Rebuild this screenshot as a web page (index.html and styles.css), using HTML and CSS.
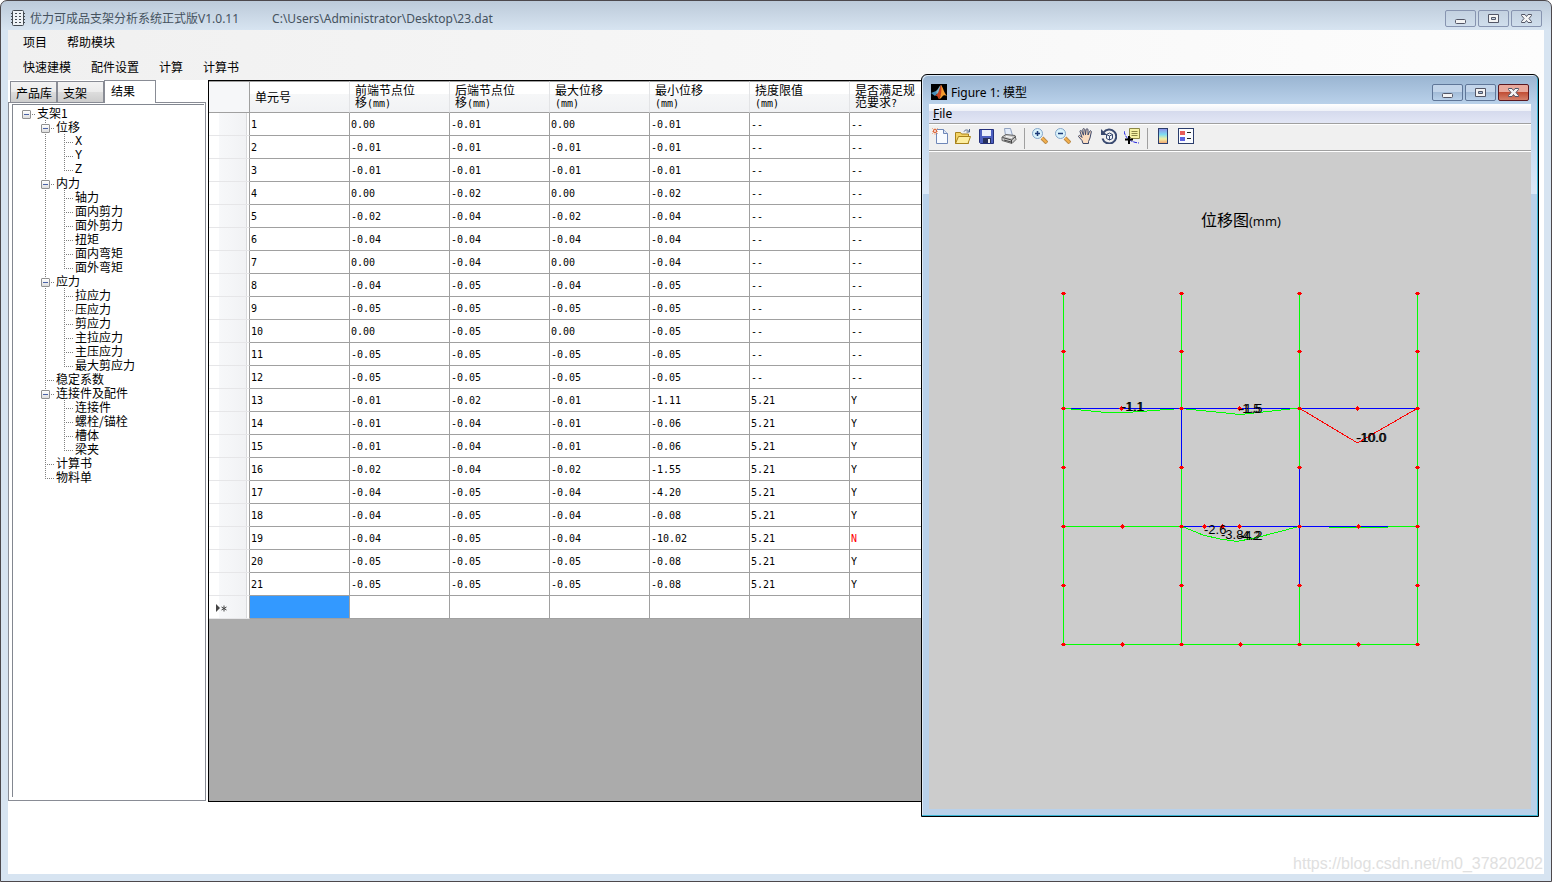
FILE: index.html
```html
<!DOCTYPE html>
<html lang="zh-CN">

  <head>
    <meta charset="utf-8"/>
    <title>优力可成品支架分析系统</title>
    <link rel="stylesheet" href="styles.css">
  </head>

  <body>

    <div id="main-window">

      <div class="titlebar">
        <svg class="app-icon" width="14" height="16" viewBox="0 0 14 16" fill="none" stroke="#444b52">
          <rect x="1.500" y="0.500" width="11" height="15" rx="1" fill="#eef2f6"/>
          <path d="M4 3.500h2M8 3.500h2M4 6.500h2M8 6.500h2M4 9.500h2M8 9.500h2M4 12.500h2M8 12.500h2M0 3.500h2M0 6.500h2M0 9.500h2M0 12.500h2M12 3.500h2M12 6.500h2M12 9.500h2M12 12.500h2"/>
        </svg>
        <span class="title">优力可成品支架分析系统正式版V1.0.11</span>
        <span class="path">C:\Users\Administrator\Desktop\23.dat</span>
        <div class="controls">
          <button aria-label="最小化"><svg width="12" height="12"><rect x="0.500" y="6.500" width="10" height="4" rx="1"/></svg></button>
          <button aria-label="最大化"><svg width="12" height="12"><path fill-rule="evenodd" d="M.5 1.500h10v8h-10zM3.500 4.500h4v2h-4z"/></svg></button>
          <button aria-label="关闭"><svg width="12" height="12"><path d="M.5 1.500h3.500l1.500 2 1.500-2h3.500v1l-2.500 3 2.500 3v1h-3.500l-1.500-2-1.500 2h-3.500v-1l2.500-3-2.500-3z"/></svg></button>
        </div>
      </div>

      <div class="menus">
        <div class="menubar">
          <button>项目</button>
          <button>帮助模块</button>
        </div>
        <div class="menubar">
          <button>快速建模</button>
          <button>配件设置</button>
          <button>计算</button>
          <button>计算书</button>
        </div>
      </div>

      <div class="client">

        <div class="side">
          <div class="tabs" role="tablist">
            <button role="tab">产品库</button>
            <button role="tab">支架</button>
            <button role="tab" class="selected" aria-selected="true">结果</button>
          </div>
          <div class="tab-page">
            <div class="tree-box">
              <ul class="tree">
                <li><button class="expander" aria-label="折叠"></button>支架1
                  <ul>
                    <li><button class="expander" aria-label="折叠"></button>位移
                      <ul>
                        <li class="axis">X</li>
                        <li class="axis">Y</li>
                        <li class="axis">Z</li>
                      </ul>
                    </li>
                    <li><button class="expander" aria-label="折叠"></button>内力
                      <ul>
                        <li>轴力</li>
                        <li>面内剪力</li>
                        <li>面外剪力</li>
                        <li>扭矩</li>
                        <li>面内弯矩</li>
                        <li>面外弯矩</li>
                      </ul>
                    </li>
                    <li><button class="expander" aria-label="折叠"></button>应力
                      <ul>
                        <li>拉应力</li>
                        <li>压应力</li>
                        <li>剪应力</li>
                        <li>主拉应力</li>
                        <li>主压应力</li>
                        <li>最大剪应力</li>
                      </ul>
                    </li>
                    <li>稳定系数</li>
                    <li><button class="expander" aria-label="折叠"></button>连接件及配件
                      <ul>
                        <li>连接件</li>
                        <li>螺栓/锚栓</li>
                        <li>槽体</li>
                        <li>梁夹</li>
                      </ul>
                    </li>
                    <li>计算书</li>
                    <li>物料单</li>
                  </ul>
                </li>
              </ul>
            </div>
          </div>
        </div>

        <div class="grid">
          <table>
            <colgroup><col class="row-head"><col><col><col><col><col><col><col></colgroup>
            <thead>
              <tr>
                <th></th>
                <th>单元号</th>
                <th>前端节点位<br>移<span class="unit">(mm)</span></th>
                <th>后端节点位<br>移<span class="unit">(mm)</span></th>
                <th>最大位移<br><span class="unit">(mm)</span></th>
                <th>最小位移<br><span class="unit">(mm)</span></th>
                <th>挠度限值<br><span class="unit">(mm)</span></th>
                <th>是否满足规<br>范要求<span class="unit">?</span></th>
              </tr>
            </thead>
            <tbody>
              <tr><th></th><td>1</td><td>0.00</td><td>-0.01</td><td>0.00</td><td>-0.01</td><td>--</td><td>--</td></tr>
              <tr><th></th><td>2</td><td>-0.01</td><td>-0.01</td><td>-0.01</td><td>-0.01</td><td>--</td><td>--</td></tr>
              <tr><th></th><td>3</td><td>-0.01</td><td>-0.01</td><td>-0.01</td><td>-0.01</td><td>--</td><td>--</td></tr>
              <tr><th></th><td>4</td><td>0.00</td><td>-0.02</td><td>0.00</td><td>-0.02</td><td>--</td><td>--</td></tr>
              <tr><th></th><td>5</td><td>-0.02</td><td>-0.04</td><td>-0.02</td><td>-0.04</td><td>--</td><td>--</td></tr>
              <tr><th></th><td>6</td><td>-0.04</td><td>-0.04</td><td>-0.04</td><td>-0.04</td><td>--</td><td>--</td></tr>
              <tr><th></th><td>7</td><td>0.00</td><td>-0.04</td><td>0.00</td><td>-0.04</td><td>--</td><td>--</td></tr>
              <tr><th></th><td>8</td><td>-0.04</td><td>-0.05</td><td>-0.04</td><td>-0.05</td><td>--</td><td>--</td></tr>
              <tr><th></th><td>9</td><td>-0.05</td><td>-0.05</td><td>-0.05</td><td>-0.05</td><td>--</td><td>--</td></tr>
              <tr><th></th><td>10</td><td>0.00</td><td>-0.05</td><td>0.00</td><td>-0.05</td><td>--</td><td>--</td></tr>
              <tr><th></th><td>11</td><td>-0.05</td><td>-0.05</td><td>-0.05</td><td>-0.05</td><td>--</td><td>--</td></tr>
              <tr><th></th><td>12</td><td>-0.05</td><td>-0.05</td><td>-0.05</td><td>-0.05</td><td>--</td><td>--</td></tr>
              <tr><th></th><td>13</td><td>-0.01</td><td>-0.02</td><td>-0.01</td><td>-1.11</td><td>5.21</td><td>Y</td></tr>
              <tr><th></th><td>14</td><td>-0.01</td><td>-0.04</td><td>-0.01</td><td>-0.06</td><td>5.21</td><td>Y</td></tr>
              <tr><th></th><td>15</td><td>-0.01</td><td>-0.04</td><td>-0.01</td><td>-0.06</td><td>5.21</td><td>Y</td></tr>
              <tr><th></th><td>16</td><td>-0.02</td><td>-0.04</td><td>-0.02</td><td>-1.55</td><td>5.21</td><td>Y</td></tr>
              <tr><th></th><td>17</td><td>-0.04</td><td>-0.05</td><td>-0.04</td><td>-4.20</td><td>5.21</td><td>Y</td></tr>
              <tr><th></th><td>18</td><td>-0.04</td><td>-0.05</td><td>-0.04</td><td>-0.08</td><td>5.21</td><td>Y</td></tr>
              <tr><th></th><td>19</td><td>-0.04</td><td>-0.05</td><td>-0.04</td><td>-10.02</td><td>5.21</td><td class="fail">N</td></tr>
              <tr><th></th><td>20</td><td>-0.05</td><td>-0.05</td><td>-0.05</td><td>-0.08</td><td>5.21</td><td>Y</td></tr>
              <tr><th></th><td>21</td><td>-0.05</td><td>-0.05</td><td>-0.05</td><td>-0.08</td><td>5.21</td><td>Y</td></tr>
              <tr>
                <th><svg width="11" height="9"><path d="M0 0v8l4-4z" fill="#444"/><path d="M8 1.500v6M5.500 3l5 3M10.500 3l-5 3" stroke="#444" fill="none"/></svg></th>
                <td class="current"></td><td></td><td></td><td></td><td></td><td></td><td></td>
              </tr>
            </tbody>
          </table>
        </div>

      </div>

      <div class="watermark">https://blog.csdn.net/m0_37820202</div>

    </div>

    <div id="figure-window">

      <div class="titlebar">
        <svg class="matlab-icon" width="16" height="16" viewBox="0 0 16 16">
          <rect width="16" height="16"/>
          <path d="M0 9l5-2 2 2-3 3z" fill="#4a90b8"/>
          <path d="M5 7c2-1 3-5 5-6l-2 8-2 1z" fill="#7fb6cc"/>
          <path d="M4 12l3-3c1-2 2-7 3-8 1 0 1 3 2 6l-3 6c-1 2-2 2-2 1s-1-3-3-2z" fill="#c8431c"/>
          <path d="M10 1c2 2 3 8 6 11-2-1-4-1-5 1-1 1-2 2-3 2 2-3 3-8 2-14z" fill="#f39b2d"/>
        </svg>
        <span class="title">Figure 1: 模型</span>
        <div class="controls">
          <button aria-label="Minimize"><svg width="12" height="12"><rect x="0.500" y="6.500" width="10" height="4" rx="1"/></svg></button>
          <button aria-label="Maximize"><svg width="12" height="12"><path fill-rule="evenodd" d="M.5 1.500h10v8h-10zM3.500 4.500h4v2h-4z"/></svg></button>
          <button class="close" aria-label="Close"><svg width="12" height="12"><path d="M.5 1.500h3.500l1.500 2 1.500-2h3.500v1l-2.500 3 2.500 3v1h-3.500l-1.500-2-1.500 2h-3.500v-1l2.500-3-2.500-3z"/></svg></button>
        </div>
      </div>

      <div class="figure-menu"><button><u>F</u>ile</button></div>

      <div class="toolbar">
        <button aria-label="New Figure"><svg width="16" height="16">
          <path d="M4.500 1.500h7l4 4v10h-11z" fill="#f8fbff" stroke="#6f87b8"/>
          <path d="M11.500 1.500v4h4" fill="#dbe6f6" stroke="#6f87b8"/>
          <path d="M3 0v7M0 3.500h6M0 0l6 6M6 0l-6 6" stroke="#f0b090"/>
          <circle cx="3" cy="3" r="1.500" fill="#fff" stroke="#d8562a"/>
        </svg></button>
        <button aria-label="Open File"><svg width="16" height="16">
          <path d="M.5 15.500v-11h5l1 1.500h7v9.500z" fill="#f3d366" stroke="#a8821a"/>
          <path d="M.5 15.500l3-7h12l-2.500 7z" fill="#fdeea0" stroke="#a8821a"/>
          <path d="M9 3.500c1-2 4-2 5 0M14.500 1v3h-3" fill="none" stroke="#4a6288"/>
        </svg></button>
        <button aria-label="Save Figure"><svg width="16" height="16">
          <path d="M1.500 1.500h14v14h-13l-1-1z" fill="#4c5fc0" stroke="#24307c"/>
          <path d="M4 2h9v6h-9z" fill="#e9eefb"/>
          <path d="M5 10h8v5h-8z" fill="#26305c"/>
          <path d="M10 11h2v4h-2z" fill="#eee"/>
        </svg></button>
        <button aria-label="Print Figure"><svg width="16" height="16">
          <path d="M4.500 7.500l-1-7h6l2 7" fill="#e3ecfa" stroke="#91a2c0"/>
          <path d="M1 9l4-2.500 9 1 1 4-4 4-10-3z" fill="#c9c9c9" stroke="#666"/>
          <path d="M1.500 9.500l9 2.500 4-3.500M10.500 12v3M3 12l7 2" fill="none" stroke="#444"/>
          <path d="M5 8.500l6 1" stroke="#fff"/>
        </svg></button>
        <span class="sep"></span>
        <button aria-label="Zoom In"><svg width="16" height="16">
          <path d="M10 10l5 5" stroke="#b98a48" stroke-width="4"/><path d="M10 10l4.500 4.500" stroke="#f5b04c" stroke-width="2"/>
          <circle cx="5.500" cy="5.500" r="5" fill="#d9f2fb" stroke="#83a5c8"/>
          <path d="M3 5.500h5M5.500 3v5" stroke="#1c3a78" stroke-width="1.500"/>
        </svg></button>
        <button aria-label="Zoom Out"><svg width="16" height="16">
          <path d="M10 10l5 5" stroke="#b98a48" stroke-width="4"/><path d="M10 10l4.500 4.500" stroke="#f5b04c" stroke-width="2"/>
          <circle cx="5.500" cy="5.500" r="5" fill="#d9f2fb" stroke="#83a5c8"/>
          <path d="M3 5.500h5" stroke="#1c3a78" stroke-width="1.500"/>
        </svg></button>
        <button aria-label="Pan"><svg width="16" height="16">
          <path d="M5 15.500l-1-3-3.500-4c0-1 1-1.500 2-.5l1.500 1.500-2-6c0-1.200 1.300-1.400 1.800-.3l1.700 4-.7-5.500c0-1.500 1.700-1.500 2 0l.7 5 .6-5c.2-1.500 1.900-1.300 1.900.2v5.100l1.500-3.500c.5-1.300 2-.8 1.800.5l-1.300 6-1.500 3.500v2z" fill="#fbdcc0" stroke="#3b4668"/>
        </svg></button>
        <button aria-label="Rotate 3D"><svg width="16" height="16">
          <path d="M2.500 4.500a7 7 0 1 1-1 6" fill="none" stroke="#3a4a70" stroke-width="2"/>
          <path d="M0 1v6h6z" fill="#3a4a70"/>
          <path d="M5.500 6.500l3-1.500 3 1.500v4l-3 1.500-3-1.500zM5.500 6.500l3 1.500 3-1.500M8.500 8v4" fill="#eef3fa" stroke="#3a4a70"/>
        </svg></button>
        <button aria-label="Data Cursor"><svg width="16" height="16">
          <path d="M0 3c1 6 5 11 15 12" fill="none" stroke="#2222e0" stroke-dasharray="4 1"/>
          <path d="M5.500.5h10v10h-8l-2-2z" fill="#f6f2a4" stroke="#8c8746"/>
          <path d="M7.500 3.500h6M7.500 5.500h6M7.500 7.500h6" stroke="#8c8746"/>
          <path d="M1 11.500h8M5 8v8" stroke="#000" stroke-width="2"/>
        </svg></button>
        <span class="sep"></span>
        <button aria-label="Insert Colorbar"><svg width="16" height="16">
          <defs><linearGradient id="cb" x2="0" y2="1"><stop offset="0" stop-color="#8d8be8"/><stop offset=".4" stop-color="#7fdcf0"/><stop offset=".7" stop-color="#f3efa0"/><stop offset="1" stop-color="#f0a070"/></linearGradient></defs>
          <rect x="3.500" y="0.500" width="9" height="15" fill="url(#cb)" stroke="#2b3d6c"/>
        </svg></button>
        <button aria-label="Insert Legend"><svg width="16" height="16">
          <rect x="0.500" y="0.500" width="15" height="15" fill="#fafcff" stroke="#2b3d6c"/>
          <path d="M2 3h5v4h-5z" fill="#e85c58"/><path d="M2 9h5v4h-5z" fill="#5c62e0"/>
          <path d="M9 4.500h4M9 10.500h4" stroke="#222"/>
        </svg></button>
      </div>

      <svg class="plot" viewBox="929 152 602 657">
        <defs>
          <path id="node" d="M-2 0h5v1h-5zM-1 -1h3v3h-3z"/>
          <path id="mid-node" d="M-2 0h5v1h-5zM-1 -1h3v3h-3zM0 -2h1v5h-1z"/>
        </defs>

        <text class="plot-title" x="1201" y="226">位移图<tspan class="plot-unit">(mm)</tspan></text>

        <g class="lines">
          <!-- columns -->
          <path class="green" d="M1063.500 293v352M1181.500 293v352M1299.500 293v352M1417.500 293v352"/>
          <path class="blue" d="M1181.500 409v58M1299.500 468v117"/>
          <!-- beams -->
          <path class="blue" d="M1063 408.500h355M1181 526.500h207"/>
          <path class="green" d="M1063 408.500h8M1063 526.500h118M1388 526.500h30M1329 527.500h59M1063 644.500h355"/>
          <!-- displacement curves -->
          <path class="green" d="M1071 409l30 3h32l41-3M1186 409l40 4 14 1.500 14-1.500 45-5"/>
          <path class="green" d="M1181 526l22 9 17 4 17 2.500 20-4 42-11"/>
          <path class="red" d="M1299 408l57 34h3l59-34"/>
        </g>

        <g class="nodes">
          <use href="#node" x="1063" y="293"/><use href="#node" x="1181" y="293"/><use href="#node" x="1299" y="293"/><use href="#node" x="1417" y="293"/>
          <use href="#node" x="1063" y="351"/><use href="#node" x="1181" y="351"/><use href="#node" x="1299" y="351"/><use href="#node" x="1417" y="351"/>
          <use href="#node" x="1063" y="408"/><use href="#mid-node" x="1121" y="408"/><use href="#node" x="1181" y="408"/><use href="#mid-node" x="1239" y="408"/>
          <use href="#node" x="1299" y="408"/><use href="#mid-node" x="1357" y="408"/><use href="#node" x="1417" y="408"/>
          <use href="#node" x="1063" y="467"/><use href="#node" x="1181" y="467"/><use href="#node" x="1299" y="467"/><use href="#node" x="1417" y="467"/>
          <use href="#node" x="1063" y="526"/><use href="#mid-node" x="1122" y="526"/><use href="#node" x="1181" y="526"/><use href="#mid-node" x="1204" y="526"/><use href="#mid-node" x="1222" y="526"/>
          <use href="#mid-node" x="1239" y="526"/><use href="#node" x="1299" y="526"/><use href="#mid-node" x="1358" y="526"/><use href="#node" x="1417" y="526"/>
          <use href="#node" x="1063" y="585"/><use href="#node" x="1181" y="585"/><use href="#node" x="1299" y="585"/><use href="#node" x="1417" y="585"/>
          <use href="#node" x="1063" y="644"/><use href="#mid-node" x="1122" y="644"/><use href="#node" x="1181" y="644"/><use href="#mid-node" x="1240" y="644"/>
          <use href="#node" x="1299" y="644"/><use href="#mid-node" x="1358" y="644"/><use href="#node" x="1417" y="644"/>
        </g>

        <g class="values">
          <text x="1121" y="411">-1.1</text><text x="1122" y="411">-1.1</text>
          <text x="1238" y="413">-1.5</text><text x="1240" y="413">-1.5</text>
          <text x="1356" y="442">-10.0</text><text x="1357" y="442">-10.0</text>
          <text x="1204" y="534">-2.6</text>
          <text x="1221" y="539">-3.8</text>
          <text x="1238" y="540">-4.2</text><text x="1240" y="540">-4.2</text>
        </g>
      </svg>

    </div>

  </body>

</html>
```

FILE: styles.css
```css
*
{
box-sizing: border-box;
}

body
{
margin: 0px;
background-color: white;
font-family: "Noto Sans","Noto Sans CJK SC",sans-serif;
font-size: 12px;
color: black;
}

button
{
margin: 0px;
padding: 0px;
border: none;
background: none;
font: inherit;
color: inherit;
}

svg
{
display: block;
}

/* main window */

#main-window
{
position: relative;
display: flex;
flex-direction: column;
min-height: 100vh;
padding: 0px 7px 7px 7px;
border: 1px solid #4c484c;
border-radius: 7px 7px 0px 0px;
background: linear-gradient(#bccad9, #d7e4f1 29px);
}

.titlebar
{
display: flex;
align-items: center;
height: 29px;
padding-top: 4px;
}

#main-window .titlebar
{
padding-left: 3px;
color: #45525e;
}

#main-window .title, .path
{
padding-top: 1px;
}

.app-icon
{
margin-right: 5px;
}

.path
{
margin-left: 33px;
}

.controls
{
display: flex;
gap: 2px;
margin-left: auto;
padding: 2px 2px 0px 0px;
}

.controls button
{
display: flex;
align-items: center;
justify-content: center;
width: 31px;
height: 17px;
border: 1px solid #8794b0;
border-radius: 2px;
background: linear-gradient(#c3d1e0, #d0deec);
}

.controls svg
{
fill: #f4f4f4;
stroke: #535666;
}

.menus
{
background: linear-gradient(to right, #f0f0f0, #fdfdfd);
}

.menubar
{
display: flex;
height: 25px;
padding-left: 5px;
font-family: "Noto Sans CJK SC",sans-serif;
}

.menubar button
{
padding: 0px 10px 2px 10px;
}

.client
{
display: flex;
flex: 1;
gap: 2px;
padding: 0px 13px 72px 0px;
background-color: white;
}

/* tabs and tree */

.side
{
display: flex;
flex-direction: column;
flex: none;
width: 198px;
padding-bottom: 1px;
font-family: "Noto Sans CJK SC",sans-serif;
}

.tabs
{
display: flex;
align-items: flex-end;
height: 23px;
margin-bottom: -1px;
padding-left: 2px;
z-index: 1;
}

.tabs button
{
width: 47px;
height: 21px;
margin-bottom: 1px;
padding-left: 5px;
border: 1px solid #898c95;
border-bottom: none;
background: linear-gradient(#f3f3f3, #ebebeb 50%, #dddddd 50%, #cdcdcd);
text-align: left;
}

.tabs button.selected
{
width: 52px;
height: 23px;
margin-bottom: 0px;
padding: 0px 0px 3px 6px;
background: white;
}

.tab-page
{
display: flex;
flex: 1;
padding: 1px 1px 3px 3px;
border: 1px solid #898c95;
}

.tree-box
{
flex: 1;
padding: 1px 0px 0px 13px;
border-top: 1px solid #828790;
border-left: 1px solid #828790;
}

.tree, .tree ul
{
margin: 0px;
padding: 0px;
list-style: none;
}

.tree ul
{
margin-left: 8px;
}

.tree li
{
padding-left: 11px;
line-height: 14px;
background-image: repeating-linear-gradient(to right, #808080 0px 1px, transparent 1px 2px), repeating-linear-gradient(#808080 0px 1px, transparent 1px 2px);
background-position: 0px 8px, 0px 0px;
background-size: 10px 1px, 1px 100%;
background-repeat: no-repeat;
}

.tree li:last-child
{
background-size: 10px 1px, 1px 8px;
}

.tree > li:last-child
{
background-size: 10px 1px, 0px 0px;
}

.expander
{
width: 9px;
height: 9px;
margin: 4px 6px 0px -15px;
border: 1px solid #919191;
border-radius: 1px;
background: linear-gradient(#4b63a7, #4b63a7) center / 5px 1px no-repeat, linear-gradient(white, #dddddd);
vertical-align: top;
}

.tree .axis
{
padding-top: 2px;
font-family: "Liberation Mono",monospace;
line-height: 12px;
}

/* data grid */

.grid
{
flex: 1;
min-width: 0px;
border: 1px solid black;
background-color: #ababab;
overflow: hidden;
}

table
{
width: 741px;
table-layout: fixed;
border-collapse: separate;
border-spacing: 0px;
background-color: white;
}

.row-head
{
width: 41px;
}

th, td
{
height: 23px;
padding: 2px 1px 0px 1px;
border-right: 1px solid #a0a0a0;
border-bottom: 1px solid #a0a0a0;
font-family: "DejaVu Sans Mono",monospace;
font-size: 10px;
font-weight: normal;
line-height: 12px;
text-align: left;
white-space: nowrap;
}

thead th
{
height: 32px;
padding: 0px 5px;
border-top: 1px solid #a0a0a0;
border-right-color: #e3e4e6;
background: linear-gradient(white 40%, #f6f7f8 40%, #f1f2f4);
font-family: "Noto Sans CJK SC",sans-serif;
font-size: 12px;
}

thead th:first-child
{
border-right-color: #a0a0a0;
background: #f6f7f9;
}

tbody th
{
padding-left: 7px;
border-bottom-color: #e6e6e8;
background: linear-gradient(to right, white 10px, #f7f8fa 10px, #f1f2f4 37px, #d9dadc 37px, #d9dadc 38px, white 38px);
}

.unit
{
font-family: "DejaVu Sans Mono",monospace;
font-size: 10px;
}

.fail
{
color: red;
}

.current
{
background-color: #3399ff;
}

.watermark
{
position: absolute;
right: 8px;
bottom: 7px;
font-family: "Liberation Sans",sans-serif;
font-size: 16px;
line-height: 20px;
color: #e0e0e0;
}

/* figure window */

#figure-window
{
position: absolute;
top: 74px;
right: 13px;
display: flex;
flex-direction: column;
width: 618px;
padding: 0px 7px 7px 7px;
border: 1px solid black;
border-radius: 6px 6px 0px 0px;
background: linear-gradient(#99b4d1, #b9d1ea 29px, #dbe8f7 119px, #b9d1ea 119px);
box-shadow: inset -1px -1px 0px #38b4d4, inset 1px 1px 0px #dbe8f5;
}

#figure-window .titlebar
{
padding-left: 2px;
}

.matlab-icon
{
margin-right: 4px;
}

#figure-window .controls button
{
border-color: #5f7698;
background: linear-gradient(#c3d5ea 50%, #a3bcd8 50%, #b9d1ea);
}

#figure-window .controls button.close
{
border-color: #5a1820;
background: linear-gradient(#e9a99c 45%, #c04a30 45%, #d4806a);
}

.figure-menu
{
height: 20px;
padding-left: 4px;
border-bottom: 1px solid #a0a0a0;
background: linear-gradient(white, #eef1f8 7px, #d5daed 7px, #e2e6f5);
line-height: 19px;
}

.toolbar
{
display: flex;
align-items: center;
height: 28px;
border-top: 1px solid white;
border-bottom: 1px solid white;
background-color: #f0f0f0;
box-shadow: inset 0px -1px 0px #a0a0a0;
}

.toolbar button
{
width: 23px;
padding: 0px 4px 4px 3px;
}

.toolbar .sep
{
width: 8px;
height: 21px;
background: linear-gradient(#a0a0a0, #a0a0a0) 3px 0px / 1px 100% no-repeat;
}

.plot
{
width: 100%;
background-color: #cccccc;
}

.plot-title
{
font-size: 16px;
}

.plot-unit
{
font-family: "Open Sans",sans-serif;
font-size: 13px;
}

.lines path
{
fill: none;
shape-rendering: crispEdges;
}

.green
{
stroke: #00ff00;
}

.blue
{
stroke: #0000ff;
}

.red
{
stroke: #ff0000;
}

.nodes
{
fill: #ff0000;
shape-rendering: crispEdges;
}

.values
{
font-family: "Liberation Sans",sans-serif;
font-size: 13px;
}
```
